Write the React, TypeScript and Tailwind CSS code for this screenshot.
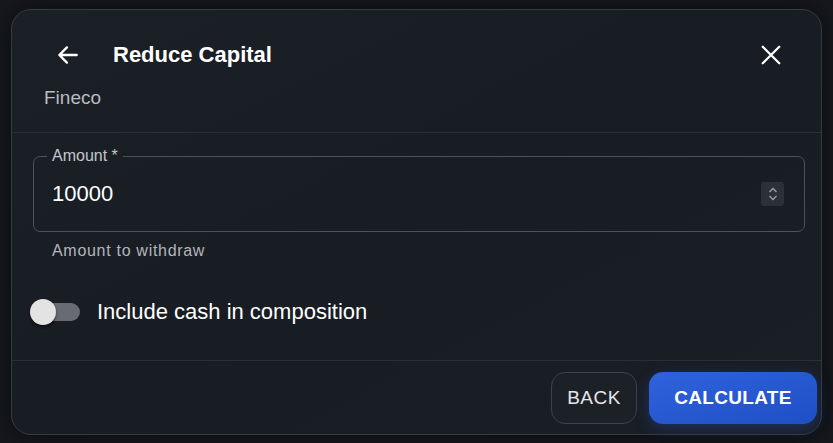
import React from "react";

export default function App() {
  const font = { fontFamily: '"Liberation Sans", Arial, sans-serif' };
  return (
    <div
      className="w-[833px] h-[443px] bg-[#15181d] pt-[9px] pl-[11px] overflow-hidden"
      style={font}
    >
      <div className="w-[811px] h-[426px] rounded-[20px] border border-[#363a42] bg-gradient-to-br from-[#1b1f26] via-[#181c23] to-[#1a1e25] flex flex-col shadow-[0_0_24px_rgba(0,0,0,0.5)]">
        {/* Header */}
        <div className="h-[123px] flex flex-col border-b border-[#2b2f36]">
          <div className="flex items-center h-[36px] mt-[27px] pl-[43px] pr-[40px]">
            <svg width="26" height="26" viewBox="0 0 24 24" className="text-white">
              <path
                d="M20 12H4.5M11 5l-7 7 7 7"
                fill="none"
                stroke="currentColor"
                strokeWidth="2.2"
                strokeLinecap="round"
                strokeLinejoin="round"
              />
            </svg>
            <div className="ml-[32px] text-[22px] font-bold text-white leading-none">
              Reduce Capital
            </div>
            <div className="flex-1" />
            <svg width="22" height="22" viewBox="0 0 24 24" className="text-white -mr-[1px]">
              <path
                d="M3 3l18 18M21 3L3 21"
                fill="none"
                stroke="currentColor"
                strokeWidth="2.5"
                strokeLinecap="round"
              />
            </svg>
          </div>
          <div className="pl-[32px] mt-[15px] text-[19px] leading-none text-[#b9bcc2]">
            Fineco
          </div>
        </div>

        {/* Content */}
        <div className="h-[228px] flex flex-col pl-[21px] pr-[16px] border-b border-[#2b2f36]">
          <div className="relative mt-[23px] h-[76px] rounded-[7px] border border-[#4d5159] flex items-center pl-[18px] pr-[20px]">
            <div className="absolute -top-[10px] left-[13px] px-[5px] bg-[#1a1e25] text-[16px] leading-[18px] text-[#c4c7cc]">
              Amount *
            </div>
            <div className="text-[22px] text-white leading-none">10000</div>
            <div className="flex-1" />
            <div className="w-[23px] h-[24px] rounded-[3px] bg-[#2c3039] flex flex-col items-center justify-center gap-[2px]">
              <svg width="10" height="6" viewBox="0 0 10 6">
                <path d="M1.5 5L5 1.5 8.5 5" fill="none" stroke="#9a9ea6" strokeWidth="1.4" />
              </svg>
              <svg width="10" height="6" viewBox="0 0 10 6">
                <path d="M1.5 1L5 4.5 8.5 1" fill="none" stroke="#9a9ea6" strokeWidth="1.4" />
              </svg>
            </div>
          </div>
          <div className="pl-[19px] mt-[10px] text-[16px] tracking-[0.7px] leading-[18px] text-[#b3b6bc]">
            Amount to withdraw
          </div>
          <div className="flex items-center mt-[38px] -ml-[3px]">
            <div className="relative w-[52px] h-[28px] flex items-center">
              <div className="absolute left-[4px] w-[46px] h-[18px] rounded-full bg-[#686b72]" />
              <div className="absolute left-[0px] w-[26px] h-[26px] rounded-full bg-[#e3e3e3] shadow-[0_2px_3px_rgba(0,0,0,0.5)]" />
            </div>
            <div className="ml-[15px] text-[22px] text-white leading-none">
              Include cash in composition
            </div>
          </div>
        </div>

        {/* Footer */}
        <div className="flex-1 flex items-start justify-end pt-[11px] pr-[4px] gap-[12px]">
          <button className="w-[86px] h-[52px] rounded-[14px] border border-[#3e424a] bg-[#1c2027] text-[19px] tracking-[0.5px] text-[#e6e7ea] flex items-center justify-center">
            BACK
          </button>
          <button className="w-[168px] h-[52px] rounded-[14px] bg-gradient-to-br from-[#2f62dc] to-[#1e4fc6] text-[19px] font-bold tracking-[0.3px] text-white flex items-center justify-center shadow-[0_4px_14px_rgba(37,88,210,0.35)]">
            CALCULATE
          </button>
        </div>
      </div>
    </div>
  );
}
